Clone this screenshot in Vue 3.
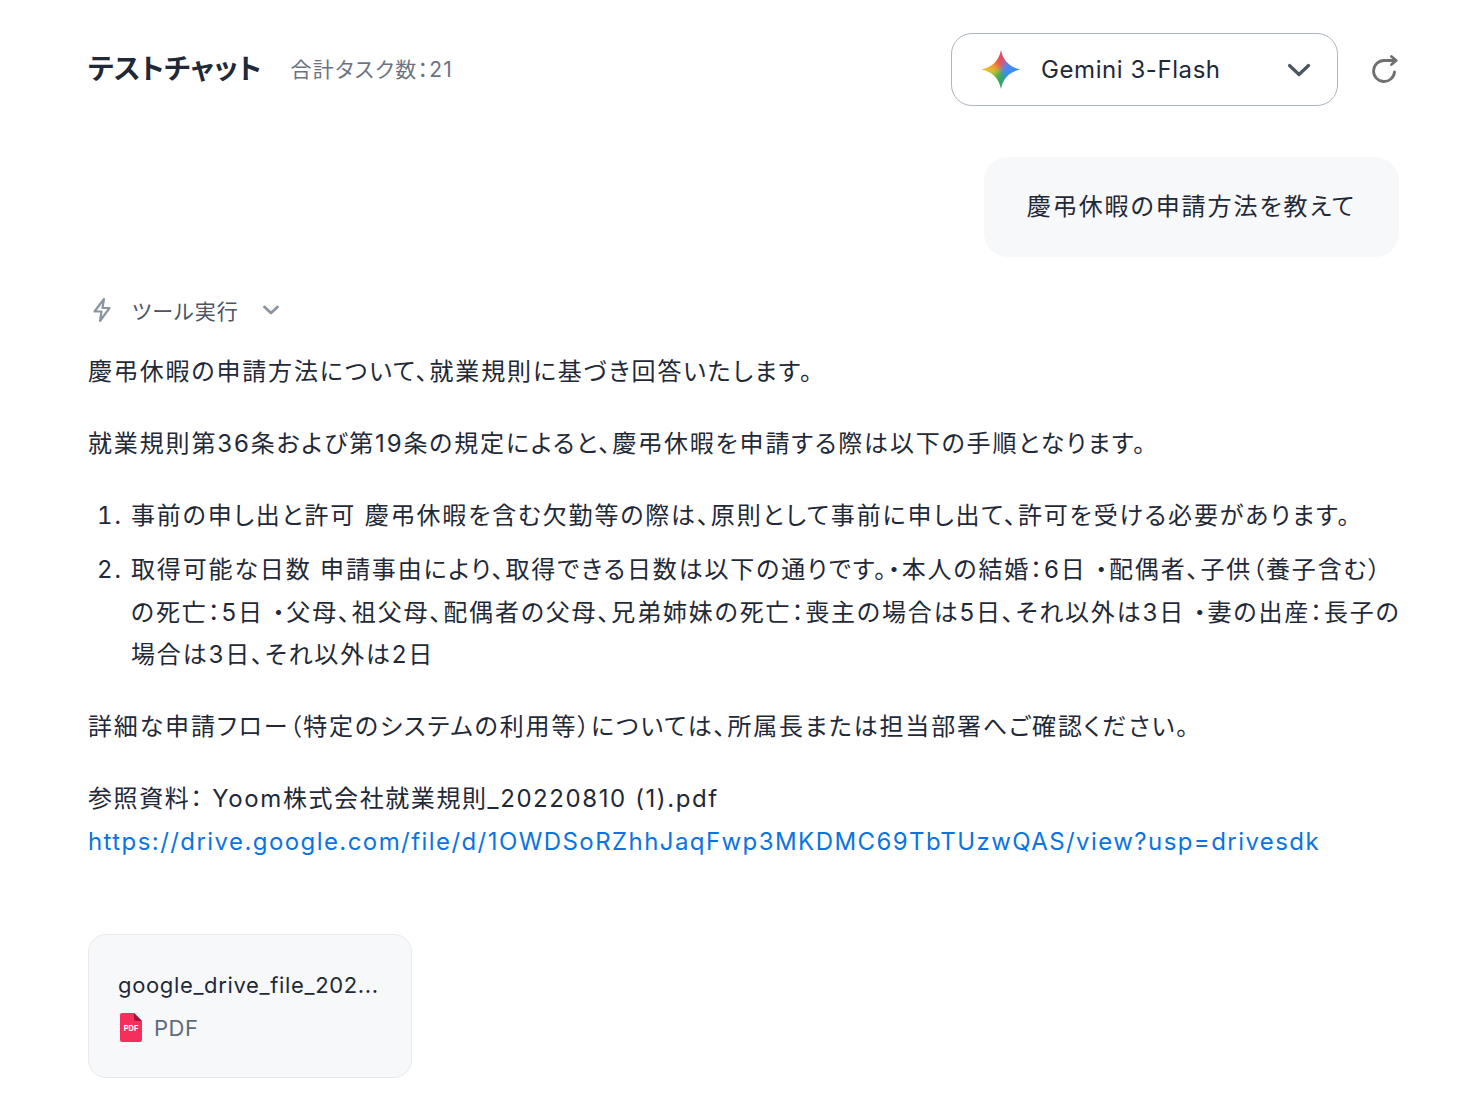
<script setup>
const items = [
  '事前の申し出と許可 慶弔休暇を含む欠勤等の際は、原則として事前に申し出て、許可を受ける必要があります。',
  '取得可能な日数 申請事由により、取得できる日数は以下の通りです。・本人の結婚：6日 ・配偶者、子供（養子含む）の死亡：5日 ・父母、祖父母、配偶者の父母、兄弟姉妹の死亡：喪主の場合は5日、それ以外は3日 ・妻の出産：長子の場合は3日、それ以外は2日'
]
</script>

<template>
  <div class="page">
    <header class="head">
      <h1 class="title">テストチャット</h1>
      <span class="count">合計タスク数：21</span>
      <div class="spacer"></div>
      <button class="model">
        <span class="star"><span class="star-fill"></span></span>
        <span class="model-name">Gemini 3-Flash</span>
        <svg class="chev" width="24" height="16" viewBox="0 0 24 16" fill="none"><path d="M2.500 3.500L12 12.500L21.500 3.500" stroke="#4b5563" stroke-width="3.200" stroke-linecap="round" stroke-linejoin="round"/></svg>
      </button>
      <svg class="reload" width="28" height="30" viewBox="0 0 28 30" fill="none">
        <path d="M23.500 17A10.500 10.500 0 1 1 13 5.500H25" stroke="#707070" stroke-width="2.800" stroke-linecap="round"/>
        <path d="M20.500 1.500L25 5.500L20.500 9.500" stroke="#707070" stroke-width="2.800" stroke-linecap="round" stroke-linejoin="round"/>
      </svg>
    </header>

    <div class="user-row">
      <div class="user-msg">慶弔休暇の申請方法を教えて</div>
    </div>

    <div class="tool">
      <svg width="20" height="26" viewBox="0 0 20 26" fill="none"><path d="M12 2L2.500 14.500H9.500L8 24L17.500 11H10.500L12 2Z" stroke="#8b95a1" stroke-width="2.200" stroke-linejoin="round"/></svg>
      <span class="tool-label">ツール実行</span>
      <svg width="18" height="12" viewBox="0 0 18 12" fill="none"><path d="M2.500 3L9 9L15.500 3" stroke="#8b95a1" stroke-width="2.800" stroke-linecap="round" stroke-linejoin="round"/></svg>
    </div>

    <div class="answer">
      <p>慶弔休暇の申請方法について、就業規則に基づき回答いたします。</p>
      <p>就業規則第36条および第19条の規定によると、慶弔休暇を申請する際は以下の手順となります。</p>
      <ol>
        <li v-for="item in items" :key="item">{{ item }}</li>
      </ol>
      <p>詳細な申請フロー（特定のシステムの利用等）については、所属長または担当部署へご確認ください。</p>
      <p class="refs">参照資料： Yoom株式会社就業規則_20220810 (1).pdf<br><a class="link">https://drive.google.com/file/d/1OWDSoRZhhJaqFwp3MKDMC69TbTUzwQAS/view?usp=drivesdk</a></p>
    </div>

    <div class="file">
      <div class="file-name">google_drive_file_202...</div>
      <div class="file-type">
        <svg width="22" height="29" viewBox="0 0 22 29">
          <path d="M2 0H14L22 8V27a2 2 0 0 1-2 2H2a2 2 0 0 1-2-2V2a2 2 0 0 1 2-2Z" fill="#f52f5b"/>
          <path d="M14 0L22 8H16a2 2 0 0 1-2-2Z" fill="#a8103a"/>
          <text x="11" y="17.500" text-anchor="middle" class="pdf-mark">PDF</text>
        </svg>
        <span>PDF</span>
      </div>
    </div>
  </div>
</template>

<style scoped>
.page {
  box-sizing: border-box;
  width: 1466px;
  padding: 33px 67px 28px 88px;
  font-family: Inter, "Noto Sans CJK JP", sans-serif;
  font-feature-settings: "palt";
  color: #1f2937;
  background: #fff;
}
.head {
  display: flex;
  align-items: center;
  height: 73px;
}
.title {
  margin: 0 0 2px;
  font-size: 28px;
  font-weight: 700;
  line-height: 40px;
  color: #1f2937;
  letter-spacing: 0.150px;
}
.count {
  margin-left: 29px;
  margin-bottom: 3px;
  font-size: 21px;
  letter-spacing: 1.300px;
  color: #6b7280;
}
.spacer { flex: 1; }
.model {
  box-sizing: border-box;
  display: flex;
  align-items: center;
  width: 387px;
  height: 73px;
  padding: 0 26px 0 29px;
  border: 1px solid #adb5bd;
  border-radius: 21px;
  background: #fff;
  font: inherit;
  color: inherit;
}
.star {
  flex: none;
  display: block;
  overflow: hidden;
  width: 40px;
  height: 40px;
  clip-path: path("M20 0.500C22 11 29 18 39.500 20C29 22 22 29 20 39.500C18 29 11 22 0.500 20C11 18 18 11 20 0.500Z");
}
.star-fill {
  display: block;
  width: 48px;
  height: 48px;
  margin: -4px;
  background: conic-gradient(from 0deg at 50% 50%, #e8434f 0deg, #b86aa8 22deg, #3f8cfb 58deg, #3b8cff 130deg, #2fa56c 172deg, #34a853 195deg, #a5c92f 245deg, #f6bd2c 272deg, #f08a35 305deg, #e8434f 360deg);
  filter: blur(2.500px);
}
.model-name {
  flex: 1;
  margin-left: 20px;
  text-align: left;
  font-size: 24px;
  letter-spacing: 0.570px;
}
.reload { margin-left: 33px; }
.user-row {
  display: flex;
  justify-content: flex-end;
  margin-top: 51px;
}
.user-msg {
  padding: 29px 43px;
  border-radius: 24px;
  background: #f7f8fa;
  font-size: 24px;
  line-height: 42px;
  letter-spacing: 1.950px;
}
.tool {
  display: flex;
  align-items: center;
  margin-top: 37px;
  height: 32px;
  color: #4b5563;
}
.tool svg:first-child { margin-left: 4px; }
.tool-label {
  margin-left: 20px;
  margin-right: 23px;
  font-size: 21px;
  letter-spacing: 1.050px;
}
.answer {
  margin-top: 25px;
  margin-right: -6px;
  font-size: 24px;
  line-height: 42.670px;
  letter-spacing: 1.850px;
}
.answer p { margin: 0 0 29.300px; }
.answer ol {
  margin: 0 0 29.300px;
  padding-left: 43px;
}
.answer li { margin-bottom: 11.500px; }
.answer li:last-child { margin-bottom: 0; }
.refs { letter-spacing: 1.590px; }
.link { color: #0b74de; letter-spacing: 1.430px; }
.file {
  box-sizing: border-box;
  width: 324px;
  height: 144px;
  margin-top: 70px;
  padding: 30px 29px;
  border: 1px solid #e8eaee;
  border-radius: 18px;
  background: #f7f8fa;
}
.file-name {
  font-size: 22px;
  line-height: 40px;
  letter-spacing: 0.650px;
  white-space: nowrap;
}
.file-type {
  display: flex;
  align-items: center;
  gap: 12px;
  margin-top: 3px;
  padding-left: 2px;
  font-size: 22px;
  line-height: 40px;
  letter-spacing: 0.500px;
  color: #5f6b7a;
}
.pdf-mark {
  font-size: 7.500px;
  font-weight: 700;
  fill: #fff;
  letter-spacing: 0;
}
</style>

<style>
html, body { margin: 0; background: #fff; }
</style>
